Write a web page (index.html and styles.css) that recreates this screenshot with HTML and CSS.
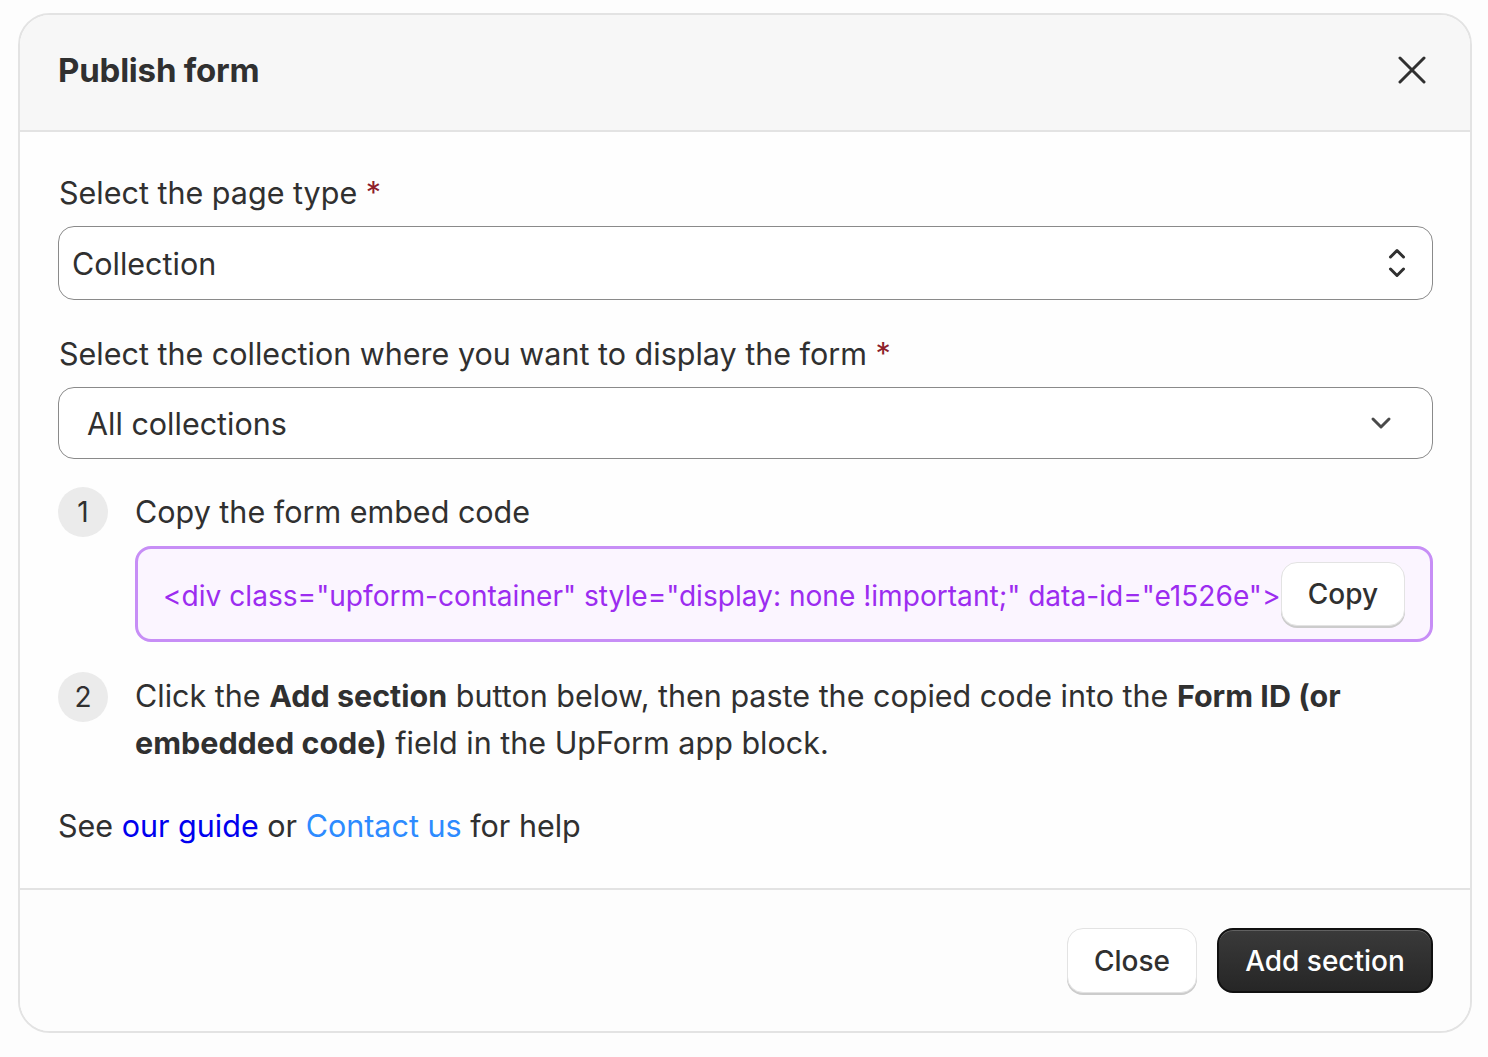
FILE: index.html
```html
<!DOCTYPE html>
<html lang="en">
<head>
<meta charset="utf-8">
<title>Publish form</title>
<link rel="stylesheet" href="styles.css">
</head>
<body>
<div class="modal">
  <header class="modal-header">
    <h2 class="modal-title">Publish form</h2>
    <button class="icon-btn" aria-label="Close">
      <svg width="28" height="28" viewBox="0 0 28 28" fill="none" stroke="#303030" stroke-width="3" stroke-linecap="round"><path d="M2 2L26 26M26 2L2 26"/></svg>
    </button>
  </header>
  <div class="modal-body">
    <div class="label">Select the page type <span class="req">*</span></div>
    <div class="select select-native">
      <span>Collection</span>
      <svg width="20" height="32" viewBox="0 0 20 32" fill="none" stroke="#303030" stroke-width="3" stroke-linecap="round" stroke-linejoin="round"><path d="M3.5 10L10 3.5L16.5 10M3.5 22L10 28.5L16.5 22"/></svg>
    </div>
    <div class="label label-2">Select the collection where you want to display the form <span class="req">*</span></div>
    <div class="select select-custom">
      <span>All collections</span>
      <svg width="22" height="14" viewBox="0 0 22 14" fill="none" stroke="#4a4a4a" stroke-width="3" stroke-linecap="round" stroke-linejoin="round"><path d="M3 3L11 11L19 3"/></svg>
    </div>

    <div class="step step-1">
      <div class="step-num">1</div>
      <div class="step-content">
        <div class="step-text">Copy the form embed code</div>
        <div class="code-box">
          <span class="code">&lt;div class="upform-container" style="display: none !important;" data-id="e1526e"&gt;&lt;/div&gt;</span>
          <button class="btn btn-secondary btn-copy">Copy</button>
        </div>
      </div>
    </div>

    <div class="step step-2">
      <div class="step-num">2</div>
      <div class="step-content">
        <div class="step-text step-text-2">Click the <b>Add section</b> button below, then paste the copied code into the <b>Form ID (or embedded code)</b> field in the UpForm app block.</div>
      </div>
    </div>

    <p class="help">See <a class="link-guide" href="#">our guide</a> or <a class="link-contact" href="#">Contact us</a> for help</p>
  </div>
  <footer class="modal-footer">
    <button class="btn btn-secondary">Close</button>
    <button class="btn btn-primary">Add section</button>
  </footer>
</div>
</body>
</html>
```
FILE: styles.css
```css
* { box-sizing: border-box; }
html, body { margin: 0; padding: 0; }
body {
  background: #fdfdfd;
  font-family: Inter, "Noto Sans", "Liberation Sans", sans-serif;
  color: #303030;
  width: 1488px;
  height: 1057px;
  overflow: hidden;
}
.modal {
  margin: 13px 0 0 18px;
  width: 1454px;
  height: 1020px;
  border: 2px solid #e3e3e3;
  border-radius: 32px;
  overflow: hidden;
  background: #fefefe;
  display: flex;
  flex-direction: column;
}
.modal-header {
  height: 117px;
  flex: none;
  background: #f7f7f7;
  border-bottom: 2px solid #e3e3e3;
  display: flex;
  align-items: center;
  justify-content: space-between;
  padding: 0 44px 6px 38px;
}
.modal-title {
  margin: 0;
  font-size: 33px;
  font-weight: 650;
  letter-spacing: -0.2px;
  color: #303030;
}
.icon-btn {
  background: none;
  border: 0;
  padding: 0;
  width: 28px;
  height: 28px;
  display: flex;
}
.modal-body {
  flex: 1;
  padding: 41px 37px 0 38px;
}
.label {
  font-size: 30.5px;
  line-height: 40px;
  margin-bottom: 13px;
  padding-left: 1px;
}
.label-2 { margin-top: 34px; }
.req { color: #8e1f2b; }
.select {
  display: flex;
  align-items: center;
  justify-content: space-between;
  border: 1.5px solid #8a8a8a;
  border-radius: 16px;
  background: #fff;
  font-size: 30.5px;
}
.select-native {
  height: 74px;
  padding: 0 25px 0 13px;
}
.select-custom {
  height: 72px;
  padding: 0 40px 0 28px;
}
.step {
  display: flex;
  gap: 27px;
  align-items: flex-start;
}
.step-1 { margin-top: 28px; }
.step-2 { margin-top: 30px; }
.step-num {
  width: 50px;
  height: 50px;
  flex: none;
  border-radius: 50%;
  background: #ebebeb;
  display: flex;
  align-items: center;
  justify-content: center;
  font-size: 28px;
  color: #303030;
}
.step-content { flex: 1; min-width: 0; }
.step-text {
  font-size: 30.5px;
  line-height: 50px;
}
.step-text-2 { line-height: 47px; margin-top: 0; }
.step-text b { font-weight: 650; }
.code-box {
  margin-top: 9px;
  height: 96px;
  border: 3px solid #c78ef6;
  border-radius: 16px;
  background: #fbf5ff;
  display: flex;
  align-items: center;
  padding: 0 25px;
}
.code {
  flex: 1;
  min-width: 0;
  overflow: hidden;
  white-space: nowrap;
  color: #9c2cf0;
  font-size: 28.1px;
  padding-top: 3px;
}
.btn {
  font-family: inherit;
  font-size: 28px;
  font-weight: 500;
  border-radius: 16px;
  height: 65px;
  padding: 0 26px;
  cursor: pointer;
}
.btn-secondary {
  background: #fff;
  color: #303030;
  border: 1.5px solid #e3e3e3;
  box-shadow: 0 2px 0 #cccccc;
}
.btn-copy {
  flex: none;
  height: 64px;
  width: 124px;
  padding: 0;
}
.btn-primary {
  background: linear-gradient(#3a3a3a, #262626);
  color: #fff;
  border: 2px solid #111;
  box-shadow: inset 0 1px 0 rgba(255,255,255,0.2);
}
.help {
  margin: 40px 0 0 0;
  font-size: 30.5px;
  line-height: 40px;
}
.help a { text-decoration: none; }
.link-guide { color: #0000ee; }
.link-contact { color: #2d8bff; }
.modal-footer {
  height: 143px;
  flex: none;
  border-top: 2px solid #e3e3e3;
  background: #fdfdfd;
  display: flex;
  align-items: center;
  justify-content: flex-end;
  gap: 20px;
  padding: 0 37px 0 0;
}
.modal-footer .btn-secondary { width: 130px; padding: 0; }
.modal-footer .btn-primary { width: 216px; padding: 0; }
```
